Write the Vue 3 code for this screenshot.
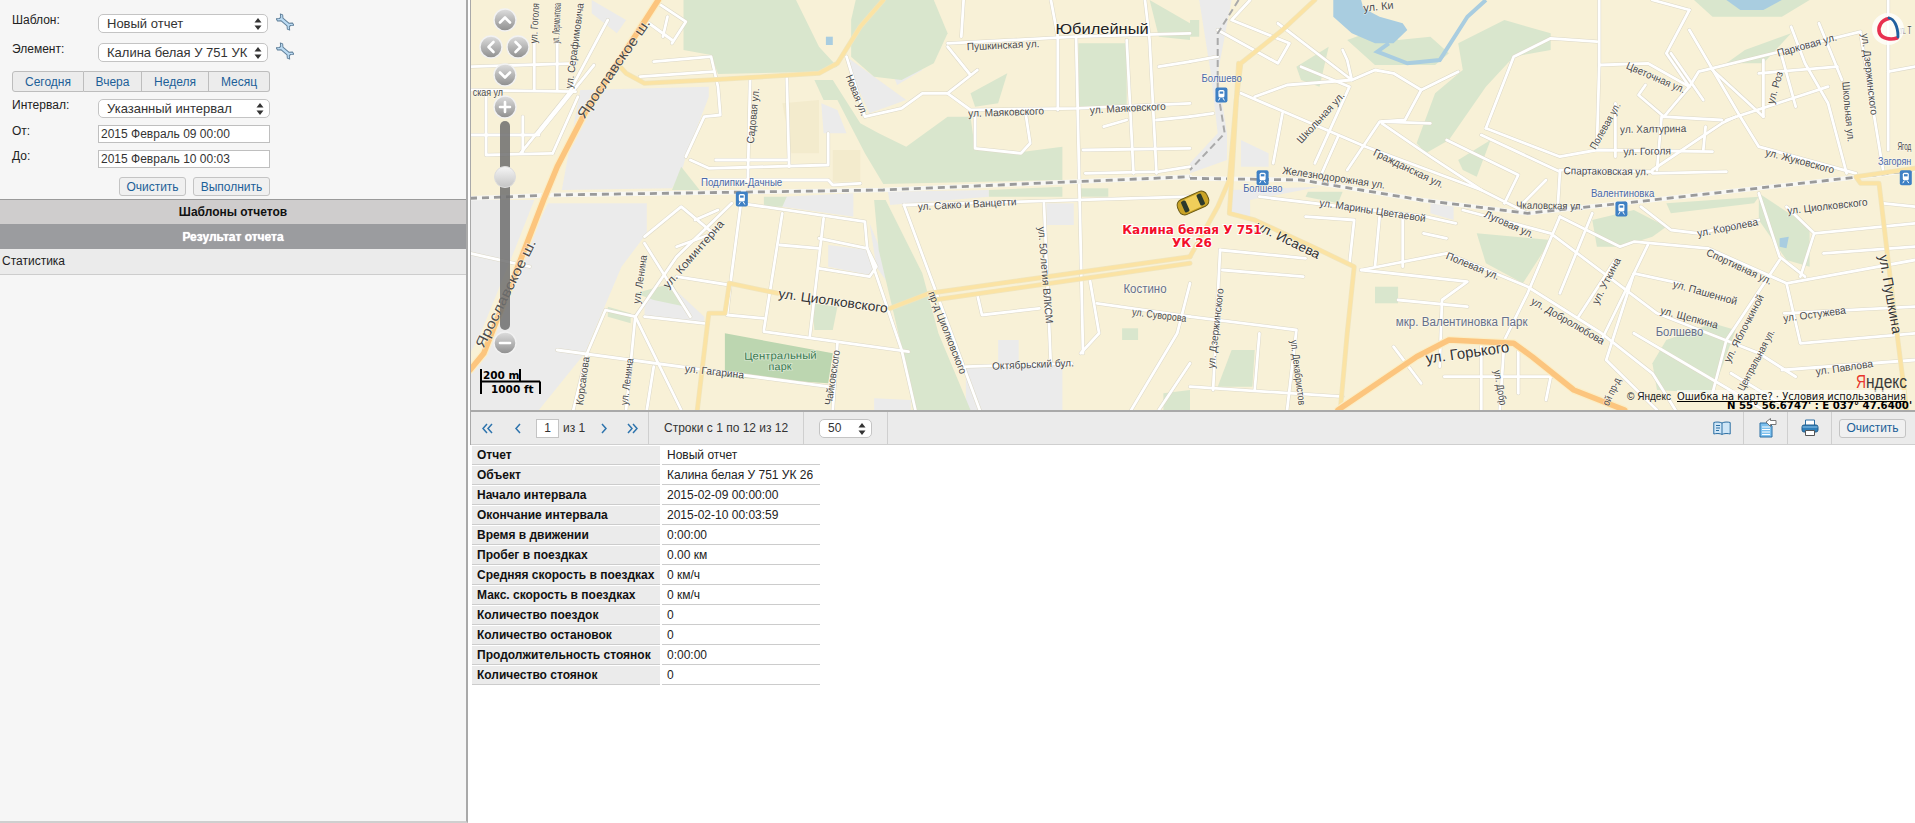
<script setup>
const toFull = {
  A: (x, y) => [470 + x * 0.4592, y / 3],
  B: (x, y) => [1190 + x * 0.4624, y / 3]
}
const conv = (g, s) =>
  s.split(' ').map((p) => {
    const [x, y] = p.split(',').map(Number)
    return toFull[g](x, y).map((n) => n.toFixed(1)).join(',')
  }).join(' ')
const group = (g, list) => list.map((s) => conv(g, s))

const grayAreas = [
  ...group('A', [
    '240,270 520,260 520,290 470,470 460,520 440,565 200,570',
    '0,600 140,600 100,740 20,1010 0,1060',
    '170,610 385,610 385,700 330,800 290,930 250,1060 150,1230 0,1230 0,1100 30,1060 110,780',
    '380,900 440,860 510,950 510,970 380,950',
    '820,170 950,300 870,340 840,250',
    '920,220 980,185 985,210 930,255',
    '265,0 340,60 320,100 265,40',
    '765,310 800,330 820,400 770,400',
    '680,590 835,580 835,650 680,620',
    '910,575 1130,570 1130,590 915,615',
    '780,735 870,750 880,800 870,825 780,800',
    '1255,610 1315,610 1315,675 1255,675',
    '1080,1105 1290,1090 1290,1230 1080,1230',
    '1150,1020 1195,1020 1195,1100 1150,1100',
    '880,1195 960,1200 960,1230 880,1230',
    '870,670 885,800 940,910 900,770'
  ]),
  ...group('B', [
    '20,0 90,0 60,220 80,400 80,480 0,520 0,490 60,400 45,220',
    '110,420 170,460 170,500 110,500',
    '90,570 280,560 130,600 130,660 90,640',
    '520,610 570,620 570,660 520,640'
  ])
]
const greens = [
  ...group('A', [
    '465,0 710,0 760,140 800,200 760,215 540,222 525,165 465,150',
    '840,0 1010,0 1040,100 1010,190 940,240 880,230 830,170 830,60',
    '760,240 790,240 850,370 890,400 950,440 1040,350 1090,350 1100,450 1180,460 1290,440 1290,540 900,552 860,460 800,300',
    '880,600 905,600 985,820 1020,1000 1090,1230 965,1230 940,1040 890,750',
    '460,500 500,570 440,570',
    '640,590 690,590 680,620 640,620',
    '1130,570 1290,560 1290,590 1130,590',
    '1330,565 1390,565 1390,590 1330,590',
    '1325,130 1430,130 1430,320 1325,320',
    '1090,280 1170,220 1150,310 1100,320',
    '750,240 790,240 800,300 770,300',
    '300,920 350,940 350,970 300,950',
    '360,880 440,850 470,920 400,900',
    '745,910 800,920 790,990 750,990',
    '1420,985 1455,985 1455,1020 1420,1020',
    '1510,1180 1568,1170 1568,1230 1510,1230',
    '1480,0 1568,70 1568,120 1500,110'
  ]),
  ...group('B', [
    '580,130 680,60 780,100 780,150 700,170 640,260 560,420 510,460 490,430 530,280 590,210',
    '340,120 400,195 530,195 560,160 520,110 450,120 420,80',
    '1090,0 1340,0 1280,50 1130,50',
    '870,660 960,630 1030,680 1000,710 930,740 880,740',
    '1230,580 1340,680 1340,800 1290,780 1230,660',
    '1030,1020 1130,970 1180,990 1130,1180 1010,1170 1000,1090',
    '400,860 450,860 450,910 400,910',
    '90,1050 140,1050 135,1160 60,1160',
    '620,700 780,720 720,850 640,790',
    '0,60 20,60 20,110 0,110',
    '230,200 300,140 280,260 240,240',
    '1030,610 1230,590 1220,610 1040,640',
    '255,575 330,575 320,610 250,590',
    '580,480 650,420 620,530 590,510',
    '1200,150 1300,100 1240,190 1160,190'
  ])
]
const park = group('A', ['555,1000 790,1060 780,1150 555,1130'])
const sand = group('A', ['790,450 850,450 850,545 790,545', '680,310 760,300 760,460 700,460'])
const waters = [
  ...group('B', [
    '310,0 370,0 375,25 410,50 460,70 470,90 440,130 400,130 350,100 310,50',
    '1160,0 1280,0 1240,30 1190,30',
    '1275,715 1295,710 1290,745 1275,740'
  ]),
  ...group('A', ['775,110 790,110 790,135 775,135'])
]
const waterLines = group('B', ['430,130 405,155 470,190 540,180 600,50 640,0'])

const whiteRoads = [
  ...group('A', [
    '0,200 230,190', '0,405 150,405', '0,270 230,275', '140,130 140,270', '190,130 190,270', '35,290 35,465 180,460',
    '115,350 115,455', '300,60 215,280 110,460', '270,195 150,400', '180,460 235,290',
    '400,185 525,170 540,260 545,345 510,350 470,470', '370,230 530,215',
    '480,480 520,505 780,495 780,400', '535,480 690,480', '610,240 605,545', '690,235 695,500',
    '510,540 780,540 790,555 850,550', '410,10 470,65 440,130', '380,60 440,120', '430,50 420,110',
    '820,170 860,350 940,325 985,280 1040,280 1090,330 1320,325 1568,310', '1040,280 1105,210',
    '1040,140 1090,225', '1040,130 1320,110 1568,100', '1075,0 1070,110', '1265,0 1280,110 1280,330',
    '1320,110 1335,1060', '1430,120 1445,520', '1470,0 1480,120 1495,520',
    '1100,340 1100,445 1200,460 1220,430 1210,340', '1335,450 1568,445', '1340,520 1500,515 1568,500',
    '1380,380 1430,360', '1495,360 1568,350', '1500,200 1568,185',
    '590,610 860,665 865,745 760,715', '590,610 570,820 560,940', '570,610 450,770 360,950',
    '680,640 640,990', '770,655 740,1010', '675,735 760,745', '760,805 870,830 885,800 865,745 940,1050 970,1230',
    '640,995 955,1055', '380,710 460,620 530,700 450,740', '490,660 540,630', '450,830 565,855',
    '560,945 640,955', '380,950 510,970', '360,950 340,1230', '360,950 295,930 255,1060 225,1230',
    '360,950 460,1230', '380,730 480,950', '190,1050 780,1160', '945,615 1110,1230',
    '945,615 1200,605 1568,590', '1250,610 1265,1100', '1080,1100 1310,1090',
    '1105,885 1115,945 1240,925', '1350,840 1370,1000 1330,1060', '1365,910 1568,950',
    '0,760 130,800', '1500,1230 1568,1090', '1440,1230 1540,1000 1568,850', '400,1100 385,1230', '800,1030 790,1230'
  ]),
  ...group('B', [
    '0,185 60,170', '60,90 190,190 215,130 90,60 130,0', '110,280 380,440 630,570 730,640',
    '190,70 350,240 340,180 330,150', '140,290 210,255 350,240 400,210 440,220 500,270 580,215',
    '500,270 465,360 410,365 340,510', '0,350 50,340', '200,340 180,490', '240,200 345,260 270,490',
    '320,410 285,520', '415,365 520,370', '415,370 520,470 630,570', '555,420 710,525 680,610',
    '630,405 800,515 795,630', '640,385 800,470 880,450 1130,455', '640,385 700,170 780,115 880,125',
    '885,0 885,200 880,440', '885,195 990,190 1080,260 1100,215 1450,95', '1300,80 1330,190 1380,310 1420,520',
    '770,540 720,610', '1000,520 1160,515', '800,510 1000,515', '1010,510 1020,350 1150,360', '1160,360 1380,260',
    '1025,350 970,285 985,255', '1025,350 1080,260 1030,160 1080,30', '1040,160 1110,300',
    '1080,90 1190,350 1230,440 1440,520', '1180,350 1150,370 1000,510', '920,310 920,470', '1115,380 1110,450',
    '1130,210 1240,350', '150,590 510,650 575,670', '250,650 355,660 345,790', '410,650 400,800', '460,650 460,800',
    '505,700 555,715', '370,810 555,760 730,860 890,1000 1000,1120 1050,1230', '370,810 600,845 545,900 540,1100',
    '450,900 600,920', '590,630 780,700 1010,940 1230,1060 1310,1130', '800,650 730,880 680,1020 670,1230',
    '870,640 800,880', '920,780 840,950', '800,650 930,740 960,725 1120,745 1290,850 1568,780',
    '990,735 890,1020', '1060,850 960,820 900,1080 1010,1230', '1230,580 1275,770 1330,830',
    '1275,780 1160,1020 1130,1180', '1350,700 1568,670', '1370,760 1568,740', '1290,850 1320,1030 1568,1000',
    '1280,1110 1568,1080', '1285,940 1568,920', '65,750 250,775', '65,750 50,1170', '70,810 245,830',
    '0,950 230,990 210,1230', '150,1000 140,1170', '0,1160 330,1190', '550,1130 790,1130', '630,1030 630,1230',
    '710,1040 710,1180', '780,1130 770,1200', '440,1040 500,1150', '1290,620 1350,700 1320,830',
    '1510,0 1510,450', '1450,100 1500,520', '1360,70 1410,240', '1240,180 1240,350', '1280,170 1310,320',
    '1230,220 1400,200', '1568,620 1500,610', '975,620 1040,690 1100,700 1230,660', '960,1000 1180,1180 1240,1230',
    '1568,200 1510,215', '1000,0 1080,30', '1170,1120 1300,1230'
  ])
]
const yellowRoads = [
  ...group('A', [
    '900,0 850,80 800,190 760,220 520,240 380,250 340,220 320,190',
    '565,850 670,880', '915,925 1000,880 1568,770', '1010,900 1568,790',
    '565,850 555,940 520,940 495,1230'
  ]),
  ...group('B', [
    '270,0 200,90 110,190 100,300 85,540 60,620 0,770',
    '105,190 90,540 85,640 140,660 280,750 355,800 340,1000 325,1230',
    '1568,505 1440,530 1450,550 1490,550 1520,900 1550,1230'
  ])
]
const orangeRoads = [
  ...group('A', ['410,0 340,150 250,340 190,500 160,600 110,780 30,1060 0,1110']),
  ...group('B', ['320,1230 490,1070 560,1020 700,1030 740,1070 830,1170 940,1230'])
]
const rails = [
  ...group('A', ['0,595 180,585 900,570 1568,530']),
  ...group('B', ['0,535 240,540 500,600 730,640 1000,600 1450,530 1568,510'])
]
const branch = group('B', ['105,0 60,100 60,270 75,400 0,510'])

const stations = [
  toFull.A(592, 597), toFull.B(68, 285), toFull.B(157, 533), toFull.B(933, 627), toFull.B(1548, 533)
]

const DARK = '#4b4b4b'
const BLUE = '#4a69a8'
const SLATE = '#66708a'
const raw = [
  ['A', 240, 350, 385, 60, 'Ярославское ш.', 14],
  ['A', 20, 1040, 135, 720, 'Ярославское ш.', 14],
  ['A', 610, 430, 622, 265, 'Садовая ул.', 10.5],
  ['A', 825, 225, 860, 345, 'Новая ул.', 10.5],
  ['A', 1082, 140, 1240, 130, 'Пушкинская ул.', 10.5],
  ['A', 1275, 85, 1478, 85, 'Юбилейный', 15, '#222'],
  ['A', 1085, 340, 1250, 332, 'ул. Маяковского', 10.5],
  ['A', 1350, 330, 1515, 318, 'ул. Маяковского', 10.5],
  ['A', 503, 548, 680, 548, 'Подлипки-Дачные', 10.5, BLUE],
  ['A', 975, 620, 1190, 605, 'ул. Сакко и Ванцетти', 10.5],
  ['A', 425, 860, 548, 665, 'ул. Коминтерна', 11],
  ['A', 362, 910, 378, 765, 'ул. Ленина', 10.5],
  ['A', 335, 1215, 348, 1075, 'ул. Ленина', 10.5],
  ['A', 672, 880, 910, 925, 'ул. Циолковского', 13, '#333'],
  ['A', 1245, 680, 1262, 970, 'ул. 50-летия ВЛКСМ', 10.5],
  ['A', 1005, 875, 1075, 1120, 'пр-д Циолковского', 10.5],
  ['A', 1423, 865, 1517, 865, 'Костино', 12, SLATE],
  ['A', 1442, 935, 1560, 955, 'ул. Суворова', 10.5],
  ['A', 1137, 1098, 1315, 1088, 'Октябрьский бул.', 10.5],
  ['A', 468, 1105, 597, 1125, 'ул. Гагарина', 10.5],
  ['A', 597, 1068, 755, 1065, 'Центральный', 10.5, '#3a7a50'],
  ['A', 650, 1100, 700, 1098, 'парк', 10.5, '#3a7a50'],
  ['A', 780, 1215, 798, 1050, 'Чайковского', 10.5],
  ['A', 238, 1215, 252, 1070, 'Корсакова', 10.5],
  ['A', 215, 265, 240, 9, 'ул. Серафимовича', 10.5],
  ['A', 138, 130, 143, 9, 'ул. Гоголя', 10.5],
  ['A', 186, 130, 190, 9, 'ул. Лермонтова', 10.5],
  ['A', 6, 278, 72, 278, 'ская ул', 10.5],
  ['B', 375, 24, 440, 14, 'ул. Ки', 11],
  ['B', 25, 235, 112, 235, 'Болшево', 10.5, BLUE],
  ['B', 115, 566, 200, 566, 'Болшево', 10.5, BLUE],
  ['B', 235, 425, 330, 280, 'Школьная ул.', 10.5],
  ['B', 200, 510, 422, 555, 'Железнодорожная ул.', 10.5],
  ['B', 398, 455, 548, 555, 'Гражданская ул.', 10.5],
  ['B', 280, 607, 510, 655, 'ул. Марины Цветаевой', 10.5],
  ['B', 145, 675, 280, 765, 'ул. Исаева', 13, '#333'],
  ['B', 638, 640, 743, 705, 'Луговая ул.', 10.5],
  ['B', 555, 765, 668, 830, 'Полевая ул.', 10.5],
  ['B', 705, 615, 850, 618, 'Чкаловская ул.', 10.5],
  ['B', 867, 580, 1004, 580, 'Валентиновка', 10.5, BLUE],
  ['B', 870, 445, 925, 310, 'Полевая ул.', 10.5],
  ['B', 930, 388, 1073, 385, 'ул. Халтурина', 10.5],
  ['B', 937, 455, 1040, 452, 'ул. Гоголя', 10.5],
  ['B', 808, 512, 992, 515, 'Спартаковская ул.', 10.5],
  ['B', 945, 195, 1070, 270, 'Цветочная ул.', 10.5],
  ['B', 1270, 160, 1398, 110, 'Парковая ул.', 10.5],
  ['B', 1255, 310, 1275, 215, 'ул. Роз', 10.5],
  ['B', 1418, 245, 1430, 425, 'Школьная ул.', 10.5],
  ['B', 1460, 100, 1480, 345, 'ул. Дзержинского', 10.5],
  ['B', 1245, 455, 1393, 510, 'ул. Жуковского', 10.5],
  ['B', 1292, 632, 1465, 605, 'ул. Циолковского', 10.5],
  ['B', 1530, 440, 1560, 440, 'Ягод', 10.5],
  ['B', 1488, 485, 1560, 485, 'Загорян', 10.5, BLUE],
  ['B', 1097, 700, 1228, 665, 'ул. Королева', 10.5],
  ['B', 1118, 755, 1258, 845, 'Спортивная ул.', 10.5],
  ['B', 875, 910, 925, 775, 'ул. Уткина', 10.5],
  ['B', 1045, 850, 1183, 905, 'ул. Пашенной', 10.5],
  ['B', 1018, 930, 1142, 975, 'ул. Щепкина', 10.5],
  ['B', 1283, 955, 1418, 930, 'ул. Остужева', 10.5],
  ['B', 1007, 995, 1110, 995, 'Болшево', 12, SLATE],
  ['B', 445, 965, 730, 965, 'мкр. Валентиновка Парк', 12, SLATE],
  ['B', 510, 1075, 690, 1040, 'ул. Горького', 15, '#333'],
  ['B', 740, 900, 895, 1025, 'ул. Добролюбова', 10.5],
  ['B', 1160, 1085, 1235, 885, 'ул. Яблочкиной', 10.5],
  ['B', 1190, 1170, 1258, 990, 'Центральная ул.', 10.5],
  ['B', 1500, 765, 1530, 1000, 'ул. Пушкина', 14, '#333'],
  ['B', 1353, 1115, 1477, 1090, 'ул. Павлова', 10.5],
  ['B', 45, 1105, 65, 865, 'ул. Дзержинского', 10.5],
  ['B', 225, 1020, 243, 1215, 'ул. Декабристов', 10.5],
  ['B', 665, 1110, 678, 1215, 'ул. Добр', 10.5],
  ['B', 898, 1215, 925, 1135, 'ой пр-д', 10.5],
  ['B', 1530, 90, 1560, 90, 'ул. Т', 10.5]
]
const labels = raw.map(([g, x1, y1, x2, y2, text, size, color]) => {
  const [a, b] = toFull[g](x1, y1)
  const [c, d] = toFull[g](x2, y2)
  const cx = (a + c) / 2
  const cy = (b + d) / 2
  const angle = (Math.atan2(d - b, c - a) * 180) / Math.PI
  return {
    text,
    size,
    color: color || DARK,
    x: cx.toFixed(1),
    y: (cy + size * 0.35).toFixed(1),
    len: Math.hypot(c - a, d - b).toFixed(1),
    transform: `rotate(${angle.toFixed(1)} ${cx.toFixed(1)} ${cy.toFixed(1)})`
  }
})

const zoomButtons = [
  { x: 505, y: 20, d: 'M-5 2.5 L0 -2.5 L5 2.5' },
  { x: 491, y: 47, d: 'M2.5 -5 L-2.5 0 L2.5 5' },
  { x: 518, y: 47, d: 'M-2.5 -5 L2.5 0 L-2.5 5' },
  { x: 505, y: 75, d: 'M-5 -2.5 L0 2.5 L5 -2.5' },
  { x: 505, y: 107, d: 'M-5 0 H5 M0 -5 V5' },
  { x: 505, y: 343, d: 'M-5 0 H5' }
]

const rows = [
  ['Отчет', 'Новый отчет'],
  ['Объект', 'Калина белая У 751 УК 26'],
  ['Начало интервала', '2015-02-09 00:00:00'],
  ['Окончание интервала', '2015-02-10 00:03:59'],
  ['Время в движении', '0:00:00'],
  ['Пробег в поездках', '0.00 км'],
  ['Средняя скорость в поездках', '0 км/ч'],
  ['Макс. скорость в поездках', '0 км/ч'],
  ['Количество поездок', '0'],
  ['Количество остановок', '0'],
  ['Продолжительность стоянок', '0:00:00'],
  ['Количество стоянок', '0']
]
const wrench = 'M-11,-4 L-8,-5 L-5,-2 L5,-2 L8,-5 L11,-4 L8,-1.2 L8,1.2 L11,4 L8,5 L5,2 L-5,2 L-8,5 L-11,4 L-8,1.2 L-8,-1.2 Z'
</script>

<template>
  <div class="page">
    <aside class="side">
      <form class="form" @submit.prevent>
        <div class="row r1">
          <span class="lbl">Шаблон:</span>
          <label class="sel"><select><option>Новый отчет</option></select>
            <svg class="updown" width="8" height="12" viewBox="0 0 8 12"><path d="M4 0 L7.5 4.5 H.5Z M4 12 L7.5 7.5 H.5Z" fill="#333" /></svg>
          </label>
          <svg class="wrench" width="18" height="18" viewBox="-9 -9 18 18"><path :d="wrench" transform="rotate(40) scale(.8)" fill="#bcdcf4" stroke="#5f7f99" stroke-width="1.2" stroke-linejoin="round" /></svg>
        </div>
        <div class="row r2">
          <span class="lbl">Элемент:</span>
          <label class="sel"><select><option>Калина белая У 751 УК 26</option></select>
            <svg class="updown" width="8" height="12" viewBox="0 0 8 12"><path d="M4 0 L7.5 4.5 H.5Z M4 12 L7.5 7.5 H.5Z" fill="#333" /></svg>
          </label>
          <svg class="wrench" width="18" height="18" viewBox="-9 -9 18 18"><path :d="wrench" transform="rotate(40) scale(.8)" fill="#bcdcf4" stroke="#5f7f99" stroke-width="1.2" stroke-linejoin="round" /></svg>
        </div>
        <div class="tabs">
          <button class="tab t1" type="button">Сегодня</button>
          <button class="tab t2" type="button">Вчера</button>
          <button class="tab t3" type="button">Неделя</button>
          <button class="tab t4" type="button">Месяц</button>
        </div>
        <div class="row r3">
          <span class="lbl">Интервал:</span>
          <label class="sel wide"><select><option>Указанный интервал</option></select>
            <svg class="updown" width="8" height="12" viewBox="0 0 8 12"><path d="M4 0 L7.5 4.5 H.5Z M4 12 L7.5 7.5 H.5Z" fill="#333" /></svg>
          </label>
        </div>
        <div class="row r4">
          <span class="lbl">От:</span>
          <input class="date" value="2015 Февраль 09 00:00" />
        </div>
        <div class="row r4">
          <span class="lbl">До:</span>
          <input class="date" value="2015 Февраль 10 00:03" />
        </div>
        <div class="actions">
          <button class="btn clear" type="button">Очистить</button>
          <button class="btn run" type="button">Выполнить</button>
        </div>
      </form>
      <div class="head h-light">Шаблоны отчетов</div>
      <div class="head h-dark">Результат отчета</div>
      <div class="stat">Статистика</div>
    </aside>

    <main class="main">
      <div class="map">
        <svg class="mapsvg" width="1444" height="410" viewBox="471 0 1444 410">
          <defs>
            <linearGradient id="btn" x1="0" y1="0" x2="0" y2="1">
              <stop offset="0" stop-color="#dedede" />
              <stop offset="1" stop-color="#8e8e8e" />
            </linearGradient>
            <linearGradient id="knob" x1="0" y1="0" x2="0" y2="1">
              <stop offset="0" stop-color="#f6f6f6" />
              <stop offset="1" stop-color="#c4c4c4" />
            </linearGradient>
          </defs>
          <rect x="471" y="0" width="1444" height="410" fill="#f8f1d7" />
          <polygon v-for="(p, i) in sand" :key="'s' + i" :points="p" fill="#f3ebcd" />
          <polygon v-for="(p, i) in grayAreas" :key="'g' + i" :points="p" fill="#ebebeb" />
          <polygon v-for="(p, i) in greens" :key="'n' + i" :points="p" fill="#d9e6cd" />
          <polygon v-for="(p, i) in park" :key="'p' + i" :points="p" fill="#bcd6b0" />
          <polygon v-for="(p, i) in waters" :key="'w' + i" :points="p" fill="#a9cde0" />
          <polyline v-for="(p, i) in waterLines" :key="'wl' + i" :points="p" fill="none" stroke="#a9cde0" stroke-width="4" />
          <polyline v-for="(p, i) in whiteRoads" :key="'c' + i" :points="p" class="line" stroke="#dcd8c8" stroke-width="3.8" />
          <polyline v-for="(p, i) in whiteRoads" :key="'r' + i" :points="p" class="line" stroke="#ffffff" stroke-width="2.8" />
          <polyline v-for="(p, i) in rails" :key="'ra' + i" :points="p" class="line" stroke="#f7f7f4" stroke-width="4.4" />
          <polyline v-for="(p, i) in rails" :key="'rb' + i" :points="p" fill="none" stroke="#9a9a9a" stroke-width="2.8" stroke-dasharray="7 5" />
          <polyline v-for="(p, i) in branch" :key="'br' + i" :points="p" fill="none" stroke="#aaa" stroke-width="2" stroke-dasharray="7 4" />
          <polyline v-for="(p, i) in yellowRoads" :key="'yc' + i" :points="p" class="line" stroke="#f0e5bd" stroke-width="5" />
          <polyline v-for="(p, i) in yellowRoads" :key="'y' + i" :points="p" class="line" stroke="#fbe3a4" stroke-width="3.6" />
          <polyline v-for="(p, i) in orangeRoads" :key="'oc' + i" :points="p" class="line" stroke="#fbeec6" stroke-width="8" />
          <polyline v-for="(p, i) in orangeRoads" :key="'o' + i" :points="p" class="line" stroke="#fcc57e" stroke-width="5.6" />

          <g v-for="(s, i) in stations" :key="'st' + i" :transform="`translate(${s[0]} ${s[1]})`">
            <rect x="-6" y="-7.5" width="12" height="15" rx="2" fill="#3e80c4" />
            <rect x="-3" y="-5" width="6" height="7.5" rx="1.5" fill="#fff" />
            <rect x="-1.8" y="-3.5" width="3.6" height="2.2" fill="#3e80c4" />
            <path d="M-3 5.5 L-1.5 3 M3 5.5 L1.5 3" stroke="#fff" stroke-width="1" />
          </g>

          <text
            v-for="(l, i) in labels"
            :key="'l' + i"
            class="lab"
            :x="l.x"
            :y="l.y"
            :transform="l.transform"
            :font-size="l.size"
            :fill="l.color"
            :textLength="l.len"
            lengthAdjust="spacingAndGlyphs"
            text-anchor="middle"
          >{{ l.text }}</text>

          <g transform="translate(1193 203) rotate(-24)">
            <rect x="-16" y="-8" width="32" height="16" rx="6" fill="#c9a326" stroke="#6b5a14" stroke-width="1" />
            <rect x="-8" y="-6.5" width="16" height="13" rx="2" fill="#f0ce5a" />
            <rect x="-11" y="-6" width="5" height="12" rx="1.5" fill="#2c3a2c" />
            <rect x="6" y="-6" width="5" height="12" rx="1.5" fill="#2c3a2c" />
          </g>
          <text class="veh" x="1192" y="234" text-anchor="middle">Калина белая У 751</text>
          <text class="veh" x="1192" y="247" text-anchor="middle">УК 26</text>

          <g fill="none" stroke-linecap="round">
            <circle cx="1888" cy="29" r="16" fill="#fff" opacity=".75" />
            <path d="M1889 18.5 C1881 20 1877.5 27 1879.5 33 C1882 39 1891 40 1897 38" stroke="#e8304f" stroke-width="3.6" />
            <path d="M1889 18 C1894 19 1898 26 1898 37" stroke="#1f5f9e" stroke-width="2.8" />
          </g>

          <rect x="500" y="121" width="10" height="209" rx="5" fill="#6e6e6e" opacity=".85" />
          <g v-for="(b, i) in zoomButtons" :key="'z' + i" :transform="`translate(${b.x} ${b.y})`">
            <circle r="11" fill="url(#btn)" stroke="#f2f2f2" stroke-width="1.4" />
            <path :d="b.d" fill="none" stroke="#fff" stroke-width="2.6" stroke-linecap="round" stroke-linejoin="round" />
          </g>
          <circle cx="505" cy="177" r="10.5" fill="url(#knob)" stroke="#ddd" />

          <path d="M481 369 V394 M481 381.5 H540 M520 369 V381.5 M540 381.5 V394" fill="none" stroke="#000" stroke-width="2" />
          <text class="scale" x="483" y="379">200 m</text>
          <text class="scale" x="491" y="393">1000 ft</text>

          <text class="yr" x="1856" y="388" textLength="10" lengthAdjust="spacingAndGlyphs">Я</text>
          <text class="yb" x="1866" y="388" textLength="41" lengthAdjust="spacingAndGlyphs">ндекс</text>
          <text class="copy" x="1627" y="400" textLength="44" lengthAdjust="spacingAndGlyphs">© Яндекс</text>
          <rect x="1677" y="390" width="229" height="10" fill="#fff" opacity=".55" />
          <text class="terms" x="1677" y="400" textLength="229" lengthAdjust="spacingAndGlyphs">Ошибка на карте? · Условия использования</text>
          <path d="M1677 401.5 H1906" stroke="#000" stroke-width="1" />
          <text class="coord" x="1727" y="409" textLength="185" lengthAdjust="spacingAndGlyphs">N 55° 56.6747' : E 037° 47.6400'</text>
        </svg>
      </div>

      <div class="bar">
        <div class="cell pager">
          <svg class="chev" width="11" height="11" viewBox="0 0 11 11"><path d="M5 1 L1 5.5 L5 10 M10 1 L6 5.5 L10 10" /></svg>
          <svg class="chev c2" width="7" height="11" viewBox="0 0 7 11"><path d="M6 1 L2 5.5 L6 10" /></svg>
          <input class="page-in" value="1" />
          <span class="of">из 1</span>
          <svg class="chev c3" width="7" height="11" viewBox="0 0 7 11"><path d="M1 1 L5 5.5 L1 10" /></svg>
          <svg class="chev c4" width="11" height="11" viewBox="0 0 11 11"><path d="M1 1 L5 5.5 L1 10 M6 1 L10 5.5 L6 10" /></svg>
        </div>
        <div class="cell info">Строки с 1 по 12 из 12</div>
        <div class="cell size">
          <label class="sel small"><select><option>50</option></select>
            <svg class="updown" width="8" height="12" viewBox="0 0 8 12"><path d="M4 0 L7.5 4.5 H.5Z M4 12 L7.5 7.5 H.5Z" fill="#333" /></svg>
          </label>
        </div>
        <div class="fill"></div>
        <div class="cell tool">
          <svg width="18" height="14" viewBox="0 0 18 14">
            <path d="M9 2 C7 .8 3 .8 .8 1.5 V13 C3 12.3 7 12.3 9 13.4 C11 12.3 15 12.3 17.2 13 V1.5 C15 .8 11 .8 9 2Z" fill="#cfe6f7" stroke="#2c6fa3" />
            <path d="M9 2 V13.4" stroke="#2c6fa3" />
            <path d="M3 4.5 H7 M3 7 H7 M3 9.5 H6" stroke="#2c6fa3" />
          </svg>
        </div>
        <div class="cell tool doc">
          <svg width="18" height="20" viewBox="0 0 18 20">
            <path d="M1 5 H10 L13 8 V19 H1Z" fill="#7cc0ee" stroke="#2c6fa3" />
            <path d="M3 9 H11 M3 11.5 H11 M3 14 H11 M3 16.5 H11" stroke="#fff" />
            <path d="M7 4 L11.5 .5 V2.5 H17 V6.5 H11.5 V8.5Z" fill="#fff" stroke="#777" />
          </svg>
        </div>
        <div class="cell tool">
          <svg width="18" height="18" viewBox="0 0 18 18">
            <path d="M4.5 6 V1 H13.5 V6" fill="#fff" stroke="#2c6fa3" />
            <rect x="1" y="6" width="16" height="7" rx="2" fill="#2f7fba" stroke="#245f8c" />
            <path d="M4.5 11.5 H13.5 V16.5 H4.5Z" fill="#fff" stroke="#555" />
            <path d="M1.5 8 H16.5" stroke="#8fc6ea" />
          </svg>
        </div>
        <div class="cell last"><button class="btn reset" type="button">Очистить</button></div>
      </div>

      <div class="content">
        <table class="report">
          <tbody>
            <tr v-for="r in rows" :key="r[0]">
              <th>{{ r[0] }}</th>
              <td>{{ r[1] }}</td>
            </tr>
          </tbody>
        </table>
      </div>
    </main>
  </div>
</template>

<style>
html, body { margin: 0; padding: 0; overflow: hidden; }
</style>

<style scoped>
.page {
  display: flex;
  width: 1915px;
  height: 823px;
  overflow: hidden;
  background: #fff;
  font-family: "Liberation Sans", Arial, sans-serif;
  font-size: 12px;
  color: #222;
}
.side {
  box-sizing: border-box;
  width: 468px;
  height: 823px;
  flex: none;
  background: #f6f6f6;
  border-right: 2px solid #a9a9a9;
  border-bottom: 2px solid #cfcfcf;
}
.form { box-sizing: border-box; height: 199px; padding: 14px 0 0 12px; }
.row { display: flex; align-items: flex-start; }
.r2 { margin-top: 10px; }
.r3 { margin-top: 7px; }
.r4 { margin-top: 7px; }
.lbl { width: 86px; flex: none; line-height: 14px; margin-top: -1px; }
.sel { position: relative; display: block; width: 170px; height: 19px; flex: none; }
.sel.wide { width: 172px; }
.sel.small { width: 53px; }
.sel select {
  appearance: none;
  box-sizing: border-box;
  width: 100%;
  height: 19px;
  padding: 0 16px 0 8px;
  border: 1px solid #c4c4c4;
  border-radius: 5px;
  background: #fff;
  font: 13px "Liberation Sans", Arial, sans-serif;
  color: #333;
}
.updown { position: absolute; right: 6px; top: 4px; pointer-events: none; }
.wrench { margin: -1px 0 0 8px; flex: none; }
.tabs { display: flex; width: 258px; height: 21px; margin-top: 9px; }
.tab {
  box-sizing: border-box;
  height: 21px;
  padding: 0;
  border: 1px solid #bdbdbd;
  border-left-width: 0;
  background: #ececec;
  font: 12px "Liberation Sans", Arial, sans-serif;
  color: #1c5f98;
}
.t1 { width: 72px; border-left-width: 1px; border-radius: 3px 0 0 3px; }
.t2 { width: 58px; }
.t3 { width: 67px; }
.t4 { width: 61px; border-radius: 0 3px 3px 0; }
.date {
  box-sizing: border-box;
  width: 172px;
  height: 18px;
  padding: 0 2px;
  border: 1px solid #bfbfbf;
  border-radius: 0;
  background: #fff;
  font: 12px "Liberation Sans", Arial, sans-serif;
  color: #333;
  outline: none;
}
.actions { display: flex; justify-content: flex-end; gap: 7px; width: 258px; margin-top: 9px; }
.btn {
  box-sizing: border-box;
  height: 19px;
  padding: 0;
  border: 1px solid #c4c4c4;
  border-radius: 3px;
  background: #f0f0f0;
  font: 12px "Liberation Sans", Arial, sans-serif;
  color: #1c5f98;
}
.clear { width: 67px; }
.run { width: 77px; }
.head {
  box-sizing: border-box;
  height: 25px;
  line-height: 24px;
  text-align: center;
  font-weight: bold;
}
.h-light { background: #cfcdcd; border-top: 1px solid #9a9a9a; color: #111; }
.h-dark { background: #9b9c9f; color: #fff; text-shadow: 0 0 1px #fff; line-height: 26px; }
.stat {
  box-sizing: border-box;
  height: 26px;
  line-height: 25px;
  padding-left: 2px;
  background: #ebebeb;
  border-bottom: 1px solid #cdcdcd;
  color: #222;
}
.main {
  box-sizing: border-box;
  flex: 1;
  min-width: 0;
  height: 823px;
  margin-left: 2px;
  border-left: 1px solid #a9a9a9;
  display: flex;
  flex-direction: column;
}
.map {
  height: 412px;
  flex: none;
  box-sizing: border-box;
  border-bottom: 2px solid #a9a9a9;
  overflow: hidden;
}
.mapsvg { display: block; }
.line { fill: none; stroke-linejoin: round; stroke-linecap: round; }
.lab { font-family: "Liberation Sans", Arial, sans-serif; paint-order: stroke; stroke: rgba(255, 255, 255, .45); stroke-width: 1.5px; }
.veh {
  font: bold 12px "DejaVu Sans", sans-serif;
  fill: #f40f2a;
  paint-order: stroke;
  stroke: #fff;
  stroke-width: 2px;
}
.scale { font: bold 10.5px "DejaVu Sans", sans-serif; fill: #000; }
.yr { font: 19px "Liberation Sans", sans-serif; fill: #e8352c; }
.yb { font: 19px "Liberation Sans", sans-serif; fill: #3a3a3a; }
.copy { font: 10px "Liberation Sans", sans-serif; fill: #222; }
.terms { font: 10.5px "DejaVu Sans", sans-serif; fill: #111; }
.coord { font: bold 10.5px "DejaVu Sans", sans-serif; fill: #000; }
.bar {
  box-sizing: border-box;
  display: flex;
  height: 33px;
  flex: none;
  background: #ebebeb;
  border-bottom: 1px solid #cfcfcf;
}
.cell {
  box-sizing: border-box;
  display: flex;
  align-items: center;
  height: 32px;
  border-right: 1px solid #cfcfcf;
  flex: none;
}
.pager { width: 178px; padding-left: 11px; }
.chev { fill: none; stroke: #2e74ad; stroke-width: 1.5; flex: none; }
.c2 { margin-left: 21px; }
.page-in {
  box-sizing: border-box;
  width: 23px;
  height: 19px;
  margin-left: 15px;
  padding: 0;
  border: 1px solid #c4c4c4;
  background: #fff;
  font: 12px "Liberation Sans", Arial, sans-serif;
  color: #333;
  text-align: center;
}
.of { margin-left: 4px; color: #333; }
.c3 { margin-left: 16px; }
.c4 { margin-left: 19px; }
.info { width: 155px; padding-left: 15px; color: #333; }
.size { width: 84px; padding-left: 15px; }
.size select { font-size: 12px; padding-left: 8px; }
.fill { flex: 1; }
.tool { width: 44px; justify-content: center; }
.doc { padding-left: 4px; }
.last { border-right: 0; width: 83px; padding-left: 7px; }
.reset { width: 67px; }
.content { flex: 1; margin-left: -1px; background: #fff; }
.report { border-collapse: separate; border-spacing: 2px 1px; table-layout: fixed; width: 351px; }
.report th, .report td {
  box-sizing: border-box;
  height: 19px;
  padding: 0 0 0 5px;
  border-bottom: 1px solid #ccc;
  font-size: 12px;
  line-height: 18px;
  color: #222;
  text-align: left;
  white-space: nowrap;
}
.report th { width: 188px; background: #ebebeb; font-weight: bold; color: #111; }
.report td { width: 158px; }
</style>
